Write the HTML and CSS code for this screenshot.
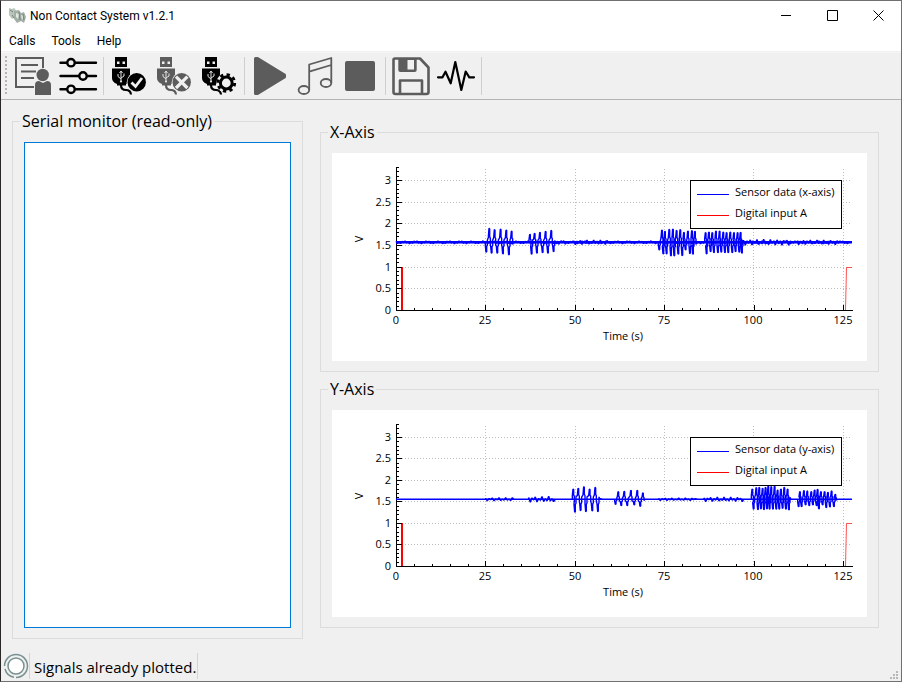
FILE: index.html
```html
<!DOCTYPE html>
<html lang="en">
<head>
<meta charset="utf-8">
<title>Non Contact System v1.2.1</title>
<link rel="stylesheet" href="styles.css">
</head>
<body>
<div class="window">
  <header class="titlebar">
    <svg class="app-icon" viewBox="0 0 17 17" aria-hidden="true">
      <path d="M0 1l3 1 2-1 3 3-1 6-4 2-3-4z" fill="#b9c6bb"/>
      <path d="M5 4l5-1 2 3 3-1 2 5-2 6-3-2-4 2-3-4z" fill="#a3afa6"/>
      <path d="M7 6l3 1-1 5-2-2zM12 8l3 1-2 4z" fill="#dfe9e0"/>
      <path d="M1 3l3 2M10 5l1 8M14 7l1 6M3 8l2 3" stroke="#76847a"/>
    </svg>
    <h1 class="title">Non Contact System v1.2.1</h1>
    <div class="controls">
      <button class="control" aria-label="Minimize"><svg viewBox="0 0 11 11"><path d="M0 5.5h10"/></svg></button>
      <button class="control" aria-label="Maximize"><svg viewBox="0 0 11 11"><path d="M.5 .5h10v10h-10z"/></svg></button>
      <button class="control" aria-label="Close"><svg viewBox="0 0 11 11"><path d="M.5 .5l10 10M10.5 .5l-10 10"/></svg></button>
    </div>
  </header>
  <nav class="menubar">
    <button class="menu">Calls</button>
    <button class="menu">Tools</button>
    <button class="menu">Help</button>
  </nav>
  <svg class="defs" aria-hidden="true">
    <symbol id="usb" viewBox="0 0 45 44">
      <path fill="currentColor" fill-rule="evenodd" d="M8 3h12v10H8zM10 7.500v2.500h2.500V7.500zM15.500 7.500v2.500H18V7.500z"/>
      <path fill="currentColor" d="M5 14.500h18v9.500q0 4-4 6v1.500h-9V30q-5-2-5-6z"/>
      <path fill="none" stroke="currentColor" stroke-width="2.200" d="M14 31q0 5 5 5 4.500 0 5 4.500"/>
      <path fill="none" stroke="#e4e4e4" d="M14 18v9M11 20v2.500l3 2.500M17 19.500V22l-3 2M12.500 19L14 17l1.500 2"/>
      <circle cx="14" cy="27.500" r="1.100" fill="#e4e4e4"/>
    </symbol>
  </svg>
  <div class="toolbar" role="toolbar">
    <span class="handle"></span>
    <button class="tool grey" aria-label="Report"><svg viewBox="0 0 45 44">
      <path fill="none" stroke="currentColor" stroke-width="2" d="M23 33H5V4h27v10M10 11h17M10 17.500h15M10 24h13"/>
      <circle cx="31.700" cy="21" r="6.200" fill="currentColor"/>
      <path fill="currentColor" d="M24 41V31q0-4 4-4l4 2 4-2q4 0 4 4v10z"/>
    </svg></button>
    <button class="tool" aria-label="Settings"><svg viewBox="0 0 45 44">
      <path stroke="currentColor" stroke-width="2.400" stroke-linecap="round" d="M4.500 8.700H40M4.500 22H40M4.500 35.300H40"/>
      <g fill="#f0f0f0" stroke="currentColor" stroke-width="2.400"><circle cx="15" cy="8.700" r="3.700"/><circle cx="27" cy="22" r="3.700"/><circle cx="15" cy="35.300" r="3.700"/></g>
    </svg></button>
    <span class="separator"></span>
    <button class="tool" aria-label="Connect"><svg viewBox="0 0 45 44"><use href="#usb"/>
      <circle cx="29.700" cy="28.300" r="10" fill="#f0f0f0"/><circle cx="29.700" cy="28.300" r="9.200" fill="currentColor"/>
      <path fill="none" stroke="#f0f0f0" stroke-width="2.800" d="M24.500 28.500l4 4 6.500-8.500"/>
    </svg></button>
    <button class="tool grey" aria-label="Disconnect"><svg viewBox="0 0 45 44"><use href="#usb"/>
      <circle cx="29.700" cy="28.300" r="10" fill="#f0f0f0"/><circle cx="29.700" cy="28.300" r="9.200" fill="currentColor"/>
      <path stroke="#f0f0f0" stroke-width="3.200" d="M24 22.600l11.400 11.400M35.400 22.600L24 34"/>
    </svg></button>
    <button class="tool" aria-label="Port settings"><svg viewBox="0 0 45 44"><use href="#usb"/>
      <circle cx="29.300" cy="29" r="10" fill="#f0f0f0"/>
      <circle cx="29.300" cy="29" r="8.400" fill="none" stroke="currentColor" stroke-width="2.800" stroke-dasharray="3.300 3.300"/>
      <circle cx="29.300" cy="29" r="5.900" fill="none" stroke="currentColor" stroke-width="3"/>
    </svg></button>
    <span class="separator"></span>
    <button class="tool grey" aria-label="Play"><svg viewBox="0 0 45 44"><path fill="currentColor" stroke="currentColor" stroke-width="3" stroke-linejoin="round" d="M7.500 4.500v35h2L36.500 23v-2L9.500 4.500z"/></svg></button>
    <button class="tool grey" aria-label="Sound"><svg viewBox="0 0 45 44"><g fill="none" stroke="currentColor" stroke-width="1.800" stroke-linejoin="round">
      <ellipse cx="10.900" cy="36" rx="5.300" ry="4"/><ellipse cx="33" cy="29" rx="5.300" ry="4"/>
      <path d="M16.200 36V10.500L38.300 4v25M16.200 17.700L38.300 11"/></g></svg></button>
    <button class="tool grey" aria-label="Stop"><svg viewBox="0 0 45 44"><rect x="7" y="7" width="30" height="30" rx="2" fill="currentColor"/></svg></button>
    <span class="separator"></span>
    <button class="tool grey" aria-label="Save"><svg viewBox="0 0 45 44">
      <path fill="none" stroke="currentColor" stroke-width="2.600" stroke-linejoin="round" d="M6 4.500h25l8.500 9V38q0 2-2 2H6.500q-2 0-2-2V6q0-1.500 1.500-1.500zM11 40V26.500h22V40"/>
      <path fill="currentColor" fill-rule="evenodd" d="M9.300 4h18.400v12q0 2-2 2H11.300q-2 0-2-2zM18.500 6v9.500h6.500V6z"/>
    </svg></button>
    <button class="tool" aria-label="Plot signals"><svg viewBox="0 0 45 44"><path fill="none" stroke="currentColor" stroke-width="2.200" stroke-linejoin="round" stroke-linecap="round" d="M4 23.300h4.500l3-5.600 5.200 11.600L21.300 8l6 28 4.400-18.500 3.600 5.800H40"/></svg></button>
    <span class="separator"></span>
  </div>
  <main class="content">
    <fieldset class="group monitor">
      <legend><label for="serial">Serial monitor (read-only)</label></legend>
      <textarea id="serial" class="serial" readonly></textarea>
    </fieldset>
    <div class="plots">
      <fieldset class="group">
        <legend>X-Axis</legend>
        <svg class="plot" id="plot-x" viewBox="0 0 535 208" role="img" aria-label="X-axis signals"></svg>
      </fieldset>
      <fieldset class="group">
        <legend>Y-Axis</legend>
        <svg class="plot" id="plot-y" viewBox="0 0 535 207" role="img" aria-label="Y-axis signals"></svg>
      </fieldset>
    </div>
  </main>
  <footer class="statusbar">
    <svg class="status-icon" viewBox="0 0 26 26" aria-hidden="true">
      <circle cx="13" cy="13" r="8" fill="#fff" stroke="#78908f" stroke-width="1.500"/>
      <path fill="none" stroke="#78908f" stroke-width="1.500" d="M1.500 13A11.500 11.500 0 0 1 13 1.500 11.500 11.500 0 0 1 24.500 13 11.500 11.500 0 0 1 13 24.500M11 24.300A11.500 11.500 0 0 1 2 16"/>
    </svg>
    <span class="message">Signals already plotted.</span>
    <svg class="grip" viewBox="0 0 8 8" aria-hidden="true"><path fill="#b8b8b8" d="M6 0h2v2H6zM3 3h2v2H3zM6 3h2v2H6zM0 6h2v2H0zM3 6h2v2H3zM6 6h2v2H6z"/></svg>
  </footer>
</div>
<script src="plots.js"></script>
</body>
</html>
```
FILE: styles.css
```css
* { box-sizing: border-box; }

body {
  margin: 0;
  font-family: "Open Sans", "Noto Sans", sans-serif;
  font-size: 12px;
  color: #000;
}

button {
  padding: 0;
  border: 0;
  background: none;
  font: inherit;
  color: inherit;
}

.window {
  display: flex;
  flex-direction: column;
  min-height: 100vh;
  border: 1px solid #707070;
  border-left-color: #2a2628;
  background: #f0f0f0;
}

.titlebar {
  display: flex;
  align-items: center;
  height: 29px;
  padding-left: 8px;
  background: #fff;
}

.app-icon { width: 17px; height: 17px; margin-right: 4px; }

.title { margin: 0; font-family: Roboto, sans-serif; font-size: 12px; font-weight: 400; }

.controls { display: flex; margin-left: auto; }

.control {
  display: grid;
  place-items: center;
  width: 46px;
  height: 29px;
}

.control svg { width: 11px; height: 11px; fill: none; stroke: #000; }

.menubar {
  display: flex;
  gap: 16px;
  height: 22px;
  padding-left: 8px;
  border-bottom: 1px solid #f0f0f0;
  background: #fff;
  font-family: Roboto, sans-serif;
}

.menu { line-height: 22px; }

.defs { display: none; }

.toolbar {
  display: flex;
  align-items: center;
  height: 48px;
  padding-left: 4px;
  border-top: 1px solid #f6f6f6;
  border-bottom: 1px solid #b4b4b4;
}

.handle {
  width: 2px;
  height: 40px;
  margin-right: 4px;
  background: repeating-linear-gradient(#b4b4b4 0 2px, transparent 2px 4px);
}

.tool { width: 45px; height: 44px; }
.tool svg { display: block; width: 45px; height: 44px; }
.grey { color: #5c5c5c; }

.separator {
  width: 1px;
  height: 38px;
  margin: 0 3px 0 2px;
  background: #cfcfcf;
}

.content {
  display: grid;
  grid-template-columns: 291fr 559fr;
  gap: 17px;
  flex: 1;
  padding: 11px 22px 14px 11px;
}

.group {
  min-width: 0;
  margin: 0;
  padding: 11px 11px 10px;
  border: 1px solid #dcdcdc;
}

.group legend {
  margin-left: -4px;
  padding: 0 2px;
  font-size: 16px;
  line-height: 20px;
}

.monitor { display: flex; }

.serial {
  flex: 1;
  min-width: 0;
  border: 1px solid #0078d7;
  outline: 0;
  background: #fff;
  resize: none;
}

.plots {
  display: flex;
  flex-direction: column;
  gap: 7px;
  padding-top: 11px;
}

.plot { display: block; width: 100%; background: #fff; }
.plot text { font-size: 11px; }

.axis { stroke: #000; fill: none; shape-rendering: crispEdges; }
.gridline { stroke: #bdbdbd; stroke-dasharray: 1 2; shape-rendering: crispEdges; }
.signal { fill: none; stroke: #00f; stroke-linejoin: bevel; }
.trace { stroke-width: 1.4; }
.key-box { fill: #fff; stroke: #000; shape-rendering: crispEdges; }
.key-signal { stroke: #00f; }
.key-input { stroke: #f00; }
.input { fill: none; stroke: #f00; }
.input-fall { stroke-width: 2; }
.input-rise { stroke: #ff5050; }
.middle { text-anchor: middle; }
.end { text-anchor: end; }

.statusbar {
  display: flex;
  align-items: flex-start;
  height: 28px;
  padding: 0 3px 0 2px;
}

.status-icon { width: 26px; height: 26px; }

.message {
  height: 26px;
  padding: 0 1px 0 4px;
  border: solid #d4d4d4;
  border-width: 0 1px;
  font-size: 15px;
  line-height: 28px;
}

.grip { width: 8px; height: 8px; margin: 18px 0 0 auto; }
```
FILE: plots.js
```js
// Samples are x, y pairs on a grid of three steps per plot pixel.
const plots = [
  {
    id: "plot-x", name: "Sensor data (x-axis)", zero: 157, rest: 367, thickness: 2.4, noise: 1.5, flatStart: true,
    bursts: [
      [-36, [499,397,508,325,515,400,524,329,532,400,542,327,549,402,559,330,567,405,575,333]],
      [-36, [630,343,635,403,644,340,651,400,660,337,668,398,677,334,684,400,694,331,701,395]],
      [804, [178,390,186,330,190,402,195,334,200,402,208,328,213,408,219,327,223,408,230,331,235,403,241,329,247,407,252,337,257,390,264,333,270,401,276,332,279,403,285,334]],
      [804, [317,338,320,402,327,336,332,395,337,338,342,398,348,333,354,398,359,333,364,397,370,336,375,398,380,338,385,398,391,336,397,398,402,338,407,395,413,338,418,397,422,337,426,400]]
    ],
    ripples: [[675, 710, 6], [725, 835, 7], [1235, 1380, 9], [1395, 1520, 7]]
  },
  {
    id: "plot-y", name: "Sensor data (y-axis)", zero: 156, rest: 373, thickness: 1.4, noise: 0,
    bursts: [
      [-36, [760,342,765,412,775,340,782,407,792,335,798,410,809,342,817,408,826,337,834,410,842,371]],
      [804, [47,388,55,350,64,392,73,349,82,392,93,346,103,390,112,346,121,394,129,354]],
      [804, [457,342,461,403,469,338,474,404,478,337,483,402,488,340,492,404,497,337,501,402,505,333,509,403,514,335,519,403,524,333,529,403,533,345,538,403,543,342,548,400,553,337,558,403,563,342,567,405]],
      [804, [596,395,600,350,605,395,612,347,617,390,622,348,628,392,634,350,639,390,644,345,650,392,653,343,657,402,663,350,668,390,674,350,679,398,684,352,690,396,695,348,702,395,706,358]]
    ],
    ripples: [[461, 545, 5], [590, 670, 9], [980, 1095, 4], [1116, 1235, 7]]
  }
];

const left = 64, right = 520, restY = 89.3;
const secondsX = [0, 89, 179, 268, 357, 447];

function burstPath([origin, s], rest) {
  const at = (x, dy) => `${((origin + x) / 3).toFixed(2)} ${(restY + dy / 3).toFixed(2)}`;
  let d = `M${at(s[0] - 3, 0)}`;
  for (let i = 0; i < s.length; i += 2) {
    const x = s[i], dy = s[i + 1] - rest;
    d += `L${at(x - 3, dy * 0.35)}L${at(x - 1, dy)}L${at(x + 1, dy * 0.95)}L${at(x + 1, dy * 0.4)}L${at(x + 3, dy * 0.3)}L${at(x + 3, dy * -0.2)}`;
  }
  return d + `L${at(s[s.length - 2] + 5, 0)}`;
}

function ripplePath([from, to, size]) {
  let d = `M${from / 3} ${restY}`;
  for (let x = from, i = 0; x < to; x += 5, i++) {
    const dy = (i % 2 ? 1 : -1) * size / 3 * (0.6 + 0.4 * Math.sin(i * 1.7));
    d += `L${(x / 3).toFixed(2)} ${(restY + dy).toFixed(2)}`;
  }
  return d + `L${(to / 3).toFixed(2)} ${restY}`;
}

function draw(p) {
  const y = v => Math.round(p.zero - v * (p.zero - 14) / 3.3);
  const one = y(1);
  let grid = "", ticks = "", labels = "";
  for (let v = 1; v <= 33; v++) {
    const major = v % 5 === 0;
    ticks += `M${left} ${y(v / 10) + .5}h${major ? 6 : 3}`;
    if (major) grid += `M${left + 6} ${y(v / 10) + .5}H${right}`;
  }
  for (let v = 0; v <= 3; v += .5) labels += `<text class="end" x="59" y="${y(v) + 4}">${v}</text>`;
  secondsX.forEach((x, i) => {
    if (i) grid += `M${left + x + .5} 16V${p.zero}`;
    labels += `<text class="middle" x="${left + x}" y="${p.zero + 14}">${i * 25}</text>`;
  });
  for (let i = 0; i <= 25; i++) ticks += `M${left + Math.round(i * 17.88) + .5} ${p.zero}v${i % 5 ? -2 : -5}`;

  let trace = "";
  for (let x = left, i = 0; x < right && p.noise; x += 1.5, i++) {
    trace += `${i ? "L" : "M"}${x} ${(restY + (i % 2 ? 1 : -1) * p.noise * (.6 + .4 * Math.sin(i * 2.3))).toFixed(2)}`;
  }
  trace += p.bursts.map(b => burstPath(b, p.rest)).join("") + p.ripples.map(ripplePath).join("");

  document.getElementById(p.id).innerHTML = `
    <path class="gridline" d="${grid}"/>
    <path class="input" d="M${p.flatStart ? left : left + 4} ${one + .5}H70"/>
    <path class="input input-fall" d="M70 ${one}V${p.zero}"/>
    <path class="input input-rise" d="M513.500 ${p.zero}L514.500 ${one + .5}H${right}"/>
    <path class="axis" d="M${left + .5} 14V${p.zero + .5}H${right + 1}${ticks}"/>
    <path class="signal" stroke-width="${p.thickness}" d="M${left} ${restY}H${right}"/>
    <path class="signal trace" d="${trace}"/>
    ${labels}
    <text class="middle" x="291" y="${p.zero + 30}">Time (s)</text>
    <text class="middle" transform="translate(31 86) rotate(-90)">V</text>
    <rect class="key-box" x="358.500" y="27.500" width="151" height="48"/>
    <path class="key-signal" d="M365 41.500h32"/>
    <path class="key-input" d="M365 62.500h32"/>
    <text x="403" y="43">${p.name}</text>
    <text x="403" y="64">Digital input A</text>`;
}

plots.forEach(draw);
```
